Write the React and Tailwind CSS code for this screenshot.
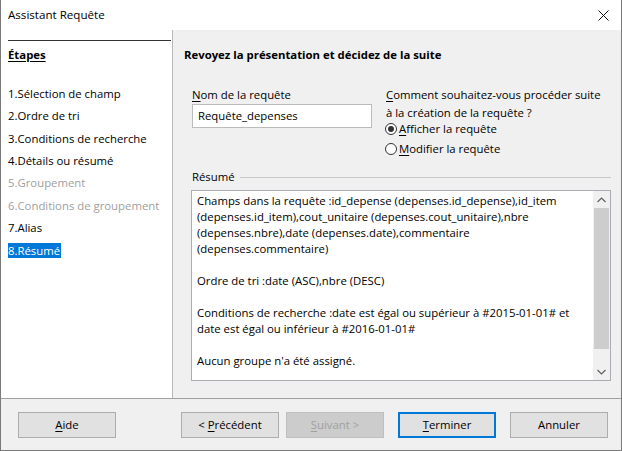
import React from "react";

const U = ({ children }) => <span className="underline underline-offset-2">{children}</span>;

function Radio({ checked }) {
  return (
    <span className="inline-flex items-center justify-center w-[12px] h-[12px] rounded-full border border-[#333] bg-white -ml-[1px] mr-[2px] shrink-0">
      {checked && <span className="w-[6px] h-[6px] rounded-full bg-[#333]" />}
    </span>
  );
}

function Btn({ children, variant }) {
  const base = "w-[98px] h-[26px] flex items-center justify-center border";
  let cls = base + " bg-[#e1e1e1] border-[#adadad]";
  if (variant === "disabled") cls = base + " bg-[#cccccc] border-[#bfbfbf] text-[#a0a0a0]";
  if (variant === "default") cls = base + " bg-[#e1e1e1] border-[#0078d7] shadow-[inset_0_0_0_1px_#0078d7]";
  return (
    <div className={cls}>
      <span className="whitespace-pre">{children}</span>
    </div>
  );
}

export default function App() {
  const steps = [
    ["1.Sélection de champ", "n"],
    ["2.Ordre de tri", "n"],
    ["3.Conditions de recherche", "n"],
    ["4.Détails ou résumé", "n"],
    ["5.Groupement", "d"],
    ["6.Conditions de groupement", "d"],
    ["7.Alias", "n"],
    ["8.Résumé", "s"],
  ];
  const lines = [
    "Champs dans la requête :id_depense (depenses.id_depense),id_item",
    "(depenses.id_item),cout_unitaire (depenses.cout_unitaire),nbre",
    "(depenses.nbre),date (depenses.date),commentaire",
    "(depenses.commentaire)",
    "",
    "Ordre de tri :date (ASC),nbre (DESC)",
    "",
    "Conditions de recherche :date est égal ou supérieur à #2015-01-01# et",
    "date est égal ou inférieur à #2016-01-01#",
    "",
    "Aucun groupe n'a été assigné.",
  ];
  return (
    <div className="w-[622px] h-[451px] bg-white flex flex-col border-x border-b border-[#7a7a7a] font-['Open_Sans',sans-serif] text-[11.35px] text-black overflow-hidden leading-[16px]">
      <div className="h-[30px] shrink-0 flex items-center justify-between pl-[7px] pr-[12px]">
        <span className="text-[11.6px]">Assistant Requête</span>
        <svg width="11" height="11" viewBox="0 0 11 11" className="mt-[1px]">
          <path d="M0.5 0.5 L10.5 10.5 M10.5 0.5 L0.5 10.5" stroke="#111" strokeWidth="1" fill="none" />
        </svg>
      </div>
      <div className="flex h-[368px] shrink-0">
        <div className="w-[172px] shrink-0 bg-white border-r border-[#b9b9b9] pl-[7px]">
          <div className="mt-[10px] h-px bg-[#333] w-[163px]" />
          <div className="mt-[6px] font-bold underline underline-offset-2">Étapes</div>
          <div className="mt-[20px] flex flex-col">
            {steps.map(([t, k]) => (
              <div key={t} className="h-[22.3px] flex items-center whitespace-nowrap">
                {k === "s" ? (
                  <span className="bg-[#0078d7] text-white leading-[15px] pr-[1px]">{t}</span>
                ) : (
                  <span className={k === "d" ? "text-[#a0a0a0]" : ""}>{t}</span>
                )}
              </div>
            ))}
          </div>
        </div>
        <div className="flex-1 bg-[#f0f0f0] flex flex-col">
          <div className="mt-[17px] pl-[11px] font-bold">Revoyez la présentation et décidez de la suite</div>
          <div className="mt-[24px] pl-[19px] pr-[10px] flex">
            <div className="w-[180px] flex flex-col">
              <div><U>N</U>om de la requête</div>
              <div className="mt-[1px] h-[24px] bg-white border border-[#bcbcbc] flex items-center pl-[5px]">Requête_depenses</div>
            </div>
            <div className="ml-[14px] flex flex-col">
              <div><U>C</U>omment souhaitez-vous procéder suite</div>
              <div className="mt-[2px]">à la création de la requête ?</div>
              <div className="flex items-center"><Radio checked /><span><U>A</U>fficher la requête</span></div>
              <div className="mt-[4px] flex items-center"><Radio /><span><U>M</U>odifier la requête</span></div>
            </div>
          </div>
          <div className="mt-[12px] pl-[19px] pr-[10px] flex items-center">
            <span>Résumé</span>
            <div className="flex-1 h-px bg-[#c8c8c8] ml-[5px]" />
          </div>
          <div className="mt-[5px] ml-[18px] mr-[10px] h-[191px] bg-white border border-[#abadb3] flex">
            <div className="flex-1 pl-[5px] pt-[2px] flex flex-col overflow-hidden">
              {lines.map((l, i) => (
                <div key={i} className="h-[16px] whitespace-nowrap">{l}</div>
              ))}
            </div>
            <div className="w-[17px] bg-[#f0f0f0] flex flex-col items-center">
              <div className="h-[17px] flex items-center justify-center">
                <svg width="9" height="6" viewBox="0 0 9 6"><path d="M0.5 5 L4.5 1 L8.5 5" stroke="#606060" fill="none" strokeWidth="1.2" /></svg>
              </div>
              <div className="w-[15px] h-[141px] bg-[#cdcdcd]" />
              <div className="flex-1 flex items-end pb-[5px] justify-center">
                <svg width="9" height="6" viewBox="0 0 9 6"><path d="M0.5 1 L4.5 5 L8.5 1" stroke="#606060" fill="none" strokeWidth="1.2" /></svg>
              </div>
            </div>
          </div>
        </div>
      </div>
      <div className="flex-1 bg-[#f0f0f0] border-t border-[#a0a0a0] flex items-center pl-[17px]">
        <Btn><U>A</U>ide</Btn>
        <div className="ml-[65px]"><Btn>{"< "}<U>P</U>récédent</Btn></div>
        <div className="ml-[7px]"><Btn variant="disabled"><U>S</U>{"uivant >"}</Btn></div>
        <div className="ml-[14px]"><Btn variant="default"><U>T</U>erminer</Btn></div>
        <div className="ml-[14px]"><Btn>Annuler</Btn></div>
      </div>
    </div>
  );
}
